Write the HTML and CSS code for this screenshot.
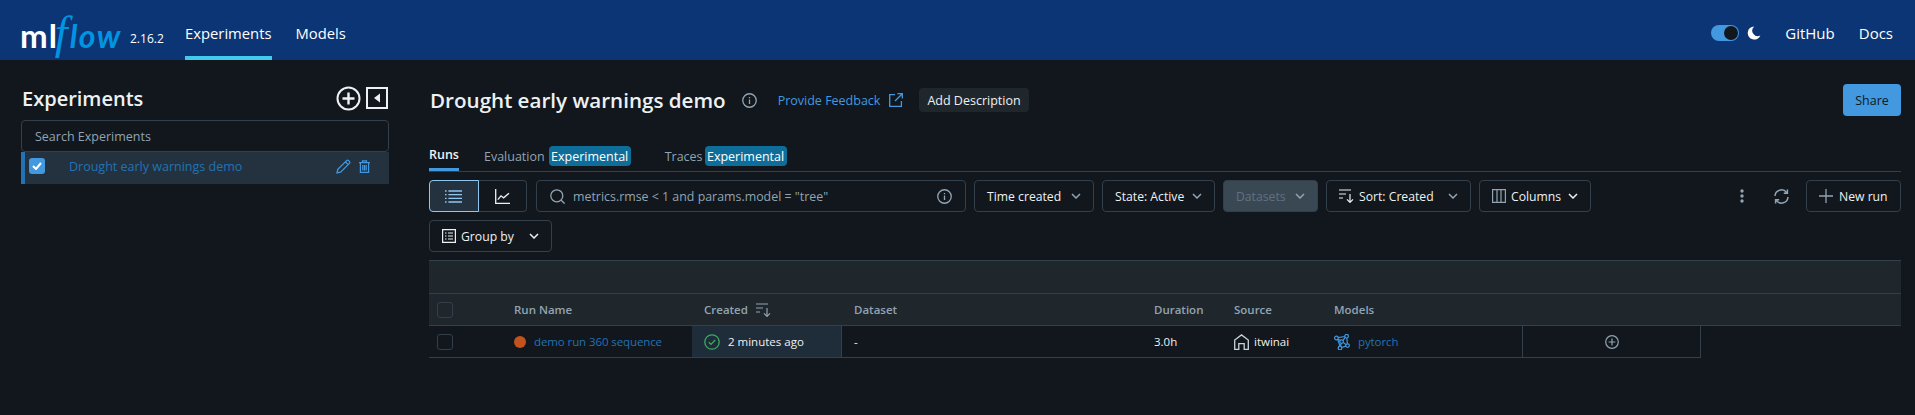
FILE: index.html
```html
<!DOCTYPE html>
<html>

<head>
  <meta charset="UTF-8">
  <title>MLflow Experiments</title>
  <link rel="stylesheet" href="styles.css">
</head>

<body>
  <header class="topbar">
    <div class="logo"><span class="logo-ml">ml</span><span class="logo-f">f</span><span class="logo-low">low</span></div>
    <span class="version">2.16.2</span>
    <nav class="topnav">
      <a class="topnav-item active">Experiments</a>
      <a class="topnav-item">Models</a>
    </nav>
    <div class="topbar-right">
      <span class="switch"><span class="switch-knob"></span></span>
      <svg class="moon" width="14" height="14" viewBox="0 0 14 14"><path d="M7.2 0.4A6.6 6.6 0 1 0 13.4 9.6 5.6 5.6 0 0 1 7.2 0.4Z" fill="#fff"/></svg>
      <a class="topbar-link">GitHub</a>
      <a class="topbar-link">Docs</a>
    </div>
  </header>

  <div class="page">
    <aside class="sidebar">
      <div class="sidebar-head">
        <h2>Experiments</h2>
        <svg class="add-exp" width="25" height="25" viewBox="0 0 25 25" fill="none" stroke="#eef1f3" stroke-width="2"><circle cx="12.5" cy="12.5" r="11"/><path d="M12.5 6.5v12M6.5 12.5h12" stroke-width="2.4"/></svg>
        <svg class="collapse" width="22" height="22" viewBox="0 0 22 22"><rect x="1" y="1" width="20" height="20" fill="none" stroke="#eef1f3" stroke-width="2"/><path d="M14 6.5v9L8 11Z" fill="#eef1f3"/></svg>
      </div>
      <div class="exp-search">Search Experiments</div>
      <div class="exp-row">
        <span class="exp-check"><svg width="10" height="8" viewBox="0 0 10 8" fill="none" stroke="#fff" stroke-width="2"><path d="M1 4l3 3 5-6"/></svg></span>
        <span class="exp-name">Drought early warnings demo</span>
        <svg class="exp-edit" width="15" height="15" viewBox="0 0 15 15" fill="none" stroke="#4299e0" stroke-width="1.3"><path d="M1 14l.8-3.6L10.6 1.6a1.4 1.4 0 0 1 2 0l.8.8a1.4 1.4 0 0 1 0 2L4.6 13.2Z M9.4 2.8l2.8 2.8"/></svg>
        <svg class="exp-trash" width="11" height="13" viewBox="0 0 11 13" fill="none" stroke="#4299e0" stroke-width="1.2"><path d="M0 2.6h11M3.5 2.4V.8h4v1.6M1.4 2.8v9.6h8.2V2.8M3.8 5v5.4M5.5 5v5.4M7.2 5v5.4"/></svg>
      </div>
    </aside>

    <main class="content">
      <div class="title-row">
        <h1>Drought early warnings demo</h1>
        <svg class="info-icon title-info" width="15" height="15" viewBox="0 0 16 16" fill="none" stroke="currentColor" stroke-width="1.4"><circle cx="8" cy="8" r="7.2"/><path d="M8 7v4.6M8 4.2v1.4"/></svg>
        <a class="feedback">Provide Feedback</a>
        <svg class="feedback-icon" width="14" height="14" viewBox="0 0 14 14" fill="none" stroke="#4299e0" stroke-width="1.3"><path d="M6 1.6H.7v11.7h11.7V8M8.4.7h4.9v4.9M13.3.7L6 8"/></svg>
        <button class="add-desc">Add Description</button>
        <button class="share">Share</button>
      </div>

      <div class="tabs">
        <span class="tab tab-runs">Runs</span>
        <span class="tab tab-eval">Evaluation</span>
        <span class="badge">Experimental</span>
        <span class="tab tab-traces">Traces</span>
        <span class="badge">Experimental</span>
      </div>

      <div class="toolbar">
        <div class="segmented">
          <span class="seg seg-on">
            <svg width="17" height="13" viewBox="0 0 17 13" fill="none" stroke="#8fc6f0" stroke-width="1.3"><path d="M0 1h1.6M3.4 1H17M0 4.7h1.6M3.4 4.7H17M0 8.4h1.6M3.4 8.4H17M0 12h1.6M3.4 12H17"/></svg>
          </span>
          <span class="seg">
            <svg width="15" height="15" viewBox="0 0 15 15" fill="none" stroke="#eef1f3" stroke-width="1.3"><path d="M.7 0v14.3H15M2.8 10.6l3.2-3.8 2.6 2 5.4-4.6"/></svg>
          </span>
        </div>
        <div class="search">
          <svg width="15" height="15" viewBox="0 0 15 15" fill="none" stroke="#92a4b3" stroke-width="1.3"><circle cx="6.8" cy="6.8" r="6"/><path d="M11.2 11.2L14.6 14.6"/></svg>
          <span class="search-text">metrics.rmse &lt; 1 and params.model = "tree"</span>
          <svg class="info-icon" width="15" height="15" viewBox="0 0 16 16" fill="none" stroke="currentColor" stroke-width="1.4"><circle cx="8" cy="8" r="7.2"/><path d="M8 7v4.6M8 4.2v1.4"/></svg>
        </div>
        <button class="btn w-time">Time created<svg class="chev" width="10" height="6" viewBox="0 0 10 6"><path d="M1 1l4 4 4-4"/></svg></button>
        <button class="btn w-state">State: Active<svg class="chev" width="10" height="6" viewBox="0 0 10 6"><path d="M1 1l4 4 4-4"/></svg></button>
        <button class="btn btn-off w-data">Datasets<svg class="chev" width="10" height="6" viewBox="0 0 10 6"><path d="M1 1l4 4 4-4"/></svg></button>
        <button class="btn w-sort">
          <svg class="sort-icon" width="15" height="14" viewBox="0 0 15 14" fill="none" stroke="#eef1f3" stroke-width="1.2"><path d="M0 1h12M0 5h7M0 9h4M11 5v8.2M8 10.4l3 3 3-3"/></svg>
          <span class="btn-label">Sort: Created</span><svg class="chev" width="10" height="6" viewBox="0 0 10 6"><path d="M1 1l4 4 4-4"/></svg>
        </button>
        <button class="btn w-cols">
          <svg class="cols-icon" width="14" height="14" viewBox="0 0 14 14" fill="none" stroke="#92a4b3" stroke-width="1.2"><path d="M.6.6h12.8v12.8H.6ZM5 .6v12.8M9 .6v12.8"/></svg>
          <span class="btn-label">Columns</span><svg class="chev chev-white" width="10" height="6" viewBox="0 0 10 6"><path d="M1 1l4 4 4-4"/></svg>
        </button>
        <div class="toolbar-right">
          <svg class="kebab" width="4" height="14" viewBox="0 0 4 14" fill="#92a4b3"><circle cx="2" cy="2" r="1.7"/><circle cx="2" cy="7" r="1.7"/><circle cx="2" cy="12" r="1.7"/></svg>
          <svg class="refresh" width="15" height="15" viewBox="0 0 15 15" fill="none" stroke="#92a4b3" stroke-width="1.5"><path d="M1 7A6.4 6.4 0 0 1 12.6 3.6M14 8A6.4 6.4 0 0 1 2.4 11.4M13.4.6v3.6H9.8M1.6 14.4v-3.6h3.6"/></svg>
          <button class="btn new-run">
            <svg width="14" height="14" viewBox="0 0 14 14" stroke="#92a4b3" stroke-width="1.3"><path d="M7 0v14M0 7h14"/></svg>
            <span>New run</span>
          </button>
        </div>
      </div>
      <div class="toolbar">
        <button class="btn w-group">
          <svg class="group-icon" width="14" height="14" viewBox="0 0 14 14" fill="none" stroke="#eef1f3" stroke-width="1.2"><path d="M.6.6h12.8v12.8H.6ZM3 4h1.5M6 4h5M3 7h1.5M6 7h5M3 10h1.5M6 10h5"/></svg>
          <span class="btn-label">Group by</span><svg class="chev chev-white" width="10" height="6" viewBox="0 0 10 6"><path d="M1 1l4 4 4-4"/></svg>
        </button>
      </div>

      <div class="runs-table">
        <div class="group-band"></div>
        <div class="table-row table-head">
          <div class="cell c-check"><span class="checkbox"></span></div>
          <div class="cell c-name">Run Name</div>
          <div class="cell c-created">Created
            <svg class="head-sort" width="15" height="14" viewBox="0 0 15 14" fill="none" stroke="#92a4b3" stroke-width="1.2"><path d="M0 1h12M0 5h7M0 9h4M11 5v8.2M8 10.4l3 3 3-3"/></svg>
          </div>
          <div class="cell c-dataset">Dataset</div>
          <div class="cell c-duration">Duration</div>
          <div class="cell c-source">Source</div>
          <div class="cell c-models">Models</div>
        </div>
        <div class="table-row table-body">
          <div class="cell c-check"><span class="checkbox"></span></div>
          <div class="cell c-name"><span class="run-dot"></span><a class="link">demo run 360 sequence</a></div>
          <div class="cell c-created created-on">
            <svg class="status-ok" width="16" height="16" viewBox="0 0 16 16" fill="none" stroke="#3caa60" stroke-width="1.3"><circle cx="8" cy="8" r="7.2"/><path d="M4.8 8.2l2.2 2.2 4.2-4.4"/></svg>
            2 minutes ago
          </div>
          <div class="cell c-dataset">-</div>
          <div class="cell c-duration">3.0h</div>
          <div class="cell c-source">
            <svg class="source-icon" width="15" height="16" viewBox="0 0 15 16" fill="none" stroke="#c8d2da" stroke-width="1.3"><path d="M.7 15.3V6L7.5.9 14.3 6v9.3H10.2V9.6H4.8v5.7Z"/></svg>
            itwinai
          </div>
          <div class="cell c-models">
            <svg class="model-icon" width="16" height="16" viewBox="0 0 16 16" fill="none" stroke="#4299e0" stroke-width="1.2"><circle cx="2.4" cy="4" r="1.8"/><circle cx="12.6" cy="2.2" r="1.8"/><circle cx="13.6" cy="11.6" r="1.8"/><circle cx="6" cy="14" r="1.8"/><circle cx="7.6" cy="7.6" r="1.8"/><path d="M4.2 3.7l6.6-1.2M3.6 5.4l2.6 6.9M12.8 4l.6 5.8M11.9 12.1l-4.2 1.4M3.9 5.1l2.4 1.4M9.2 8.4l2.9 2.3M7.3 9.4l-.9 2.8M11.2 3.3L9 6.4"/></svg>
            <a class="link">pytorch</a>
          </div>
          <div class="cell c-add">
            <svg width="14" height="14" viewBox="0 0 14 14" fill="none" stroke="#92a4b3" stroke-width="1.2"><circle cx="7" cy="7" r="6.3"/><path d="M7 3.6v6.8M3.6 7h6.8"/></svg>
          </div>
        </div>
      </div>
    </main>
  </div>
</body>

</html>
```

FILE: styles.css
```css
* {
  box-sizing: border-box;
}

html,
body {
  margin: 0;
  padding: 0;
  height: 100%;
  overflow: hidden;
}

body {
  background-color: #11171c;
  color: #eef1f3;
  font-family: "Open Sans", "Noto Sans", sans-serif;
  font-size: 12.5px;
}

/* top bar */
.topbar {
  display: flex;
  align-items: center;
  height: 60px;
  padding: 0 22px 0 20px;
  background-color: #0b3574;
}

.logo {
  display: flex;
  align-items: baseline;
  width: 105px;
  height: 40px;
  line-height: 46px;
  font-family: "Lato", sans-serif;
  white-space: nowrap;
}

.logo-ml {
  color: #fff;
  font-size: 33px;
  font-weight: 700;
  letter-spacing: 1px;
}

.logo-f {
  margin-left: -3px;
  color: #0194e2;
  font-family: "Liberation Serif", serif;
  font-size: 46px;
  font-style: italic;
}

.logo-low {
  margin-left: 2px;
  color: #0194e2;
  font-size: 32px;
  font-style: italic;
  font-weight: 700;
  letter-spacing: 1.5px;
}

.version {
  width: 55px;
  margin: 16px 0 0 5px;
  color: #fff;
  font-size: 12px;
}

.topnav {
  display: flex;
  gap: 24px;
  height: 100%;
}

.topnav-item {
  display: flex;
  align-items: center;
  padding-top: 10px;
  color: #fff;
  font-size: 14.8px;
  border-bottom: 4px solid transparent;
}

.topnav-item.active {
  border-bottom-color: #43c9ed;
}

.topbar-right {
  display: flex;
  align-items: center;
  margin-left: auto;
  padding-top: 6px;
}

.switch {
  display: flex;
  justify-content: flex-end;
  width: 28px;
  height: 16px;
  padding: 1px;
  border-radius: 8px;
  background-color: #4299e0;
}

.switch-knob {
  width: 14px;
  height: 14px;
  border-radius: 50%;
  background-color: #11171c;
}

.moon {
  margin: 0 24px 0 8px;
}

.topbar-link {
  margin-left: 24px;
  color: #fff;
  font-size: 15px;
}

.moon + .topbar-link {
  margin-left: 0;
}

/* page */
.page {
  display: flex;
  padding-right: 14px;
}

.sidebar {
  flex: none;
  width: 368px;
  margin-left: 21px;
  padding-top: 26px;
}

.sidebar-head {
  display: flex;
  align-items: center;
  height: 24px;
  margin-bottom: 10px;
}

.sidebar-head h2 {
  flex: 1;
  margin: 0;
  padding-left: 1px;
  font-size: 20px;
  font-weight: 600;
}

.add-exp {
  margin-right: 5px;
}

.collapse {
  margin-right: 1px;
}

.exp-search {
  display: flex;
  align-items: center;
  height: 32px;
  padding-left: 13px;
  border: 1px solid #333f4a;
  border-radius: 4px;
  color: #92a4b3;
}

.exp-row {
  display: flex;
  align-items: center;
  height: 32px;
  padding: 0 0 4px 4px;
  border-left: 4px solid #2272b4;
  background-color: #23323e;
}

.exp-check {
  display: flex;
  align-items: center;
  justify-content: center;
  flex: none;
  width: 16px;
  height: 16px;
  border-radius: 3px;
  background-color: #4299e0;
}

.exp-name {
  flex: 1;
  margin-left: 24px;
  color: #2272b4;
}

.exp-edit {
  margin-right: 8px;
}

.exp-trash {
  margin-right: 19px;
}

.content {
  flex: 1;
  min-width: 0;
  margin-left: 40px;
  padding-top: 24px;
}

.title-row {
  display: flex;
  align-items: center;
  height: 32px;
}

.title-row h1 {
  margin: 0 0 0 1px;
  font-size: 20.6px;
  font-weight: 600;
}

.info-icon {
  flex: none;
  color: #92a4b3;
}

.title-info {
  margin-left: 16px;
}

.feedback {
  margin-left: 21px;
  color: #4299e0;
}

.feedback-icon {
  margin-left: 9px;
}

button {
  font: inherit;
  color: inherit;
  white-space: nowrap;
}

.add-desc {
  height: 24px;
  margin-left: 16px;
  padding: 0 8px;
  border: 0;
  border-radius: 4px;
  background-color: #1f272d;
}

.share {
  width: 58px;
  height: 32px;
  margin-left: auto;
  border: 0;
  border-radius: 4px;
  background-color: #4299e0;
  color: #11171c;
}

/* tabs */
.tabs {
  display: flex;
  align-items: center;
  height: 26px;
  margin-top: 30px;
  padding-bottom: 5px;
  border-bottom: 1px solid #333f4a;
}

.tab {
  color: #92a4b3;
}

.tab-runs {
  display: flex;
  align-items: center;
  height: 25px;
  margin-bottom: -5px;
  padding-bottom: 5px;
  border-bottom: 3px solid #4299e0;
  color: #eef1f3;
  font-weight: 600;
}

.tab-eval {
  margin-left: 25px;
}

.tab-traces {
  margin-left: 34px;
}

.badge {
  display: flex;
  align-items: center;
  justify-content: center;
  width: 82px;
  height: 20px;
  margin-left: 4px;
  border-radius: 4px;
  background-color: #0e6e99;
  color: #fff;
}

.tab-traces + .badge {
  margin-left: 2px;
}

/* toolbar */
.toolbar {
  display: flex;
  gap: 8px;
  margin-top: 8px;
  font-size: 12.2px;
}

.segmented {
  display: flex;
  width: 98px;
  height: 32px;
  margin-right: 1px;
}

.seg {
  display: flex;
  align-items: center;
  justify-content: center;
  flex: 1;
  border: 1px solid #333f4a;
  border-left: 0;
  border-radius: 0 4px 4px 0;
}

.seg-on {
  border: 1px solid #8fc6f0;
  border-radius: 4px 0 0 4px;
  background-color: #23323e;
}

.search {
  display: flex;
  align-items: center;
  width: 430px;
  height: 32px;
  padding: 0 13px;
  border: 1px solid #333f4a;
  border-radius: 4px;
}

.search-text {
  flex: 1;
  margin-left: 8px;
  color: #92a4b3;
  font-size: 12.4px;
}

.btn {
  display: flex;
  align-items: center;
  justify-content: space-between;
  height: 32px;
  padding: 0 12px;
  border: 1px solid #333f4a;
  border-radius: 4px;
  background: none;
  color: #eef1f3;
}

.chev {
  flex: none;
  fill: none;
  stroke: #92a4b3;
  stroke-width: 1.5;
}

.chev-white {
  stroke: #eef1f3;
}

.btn-off {
  background-color: #3a4853;
  color: #5f7281;
}

.w-time {
  width: 120px;
}

.w-state {
  width: 113px;
}

.w-data {
  width: 95px;
}

.w-sort {
  width: 145px;
}

.w-cols {
  width: 112px;
}

.w-group {
  width: 123px;
  flex: none;
}

.btn-label {
  flex: 1;
  margin-left: 5px;
  text-align: left;
}

.toolbar-right {
  display: flex;
  align-items: center;
  flex: 1;
  justify-content: flex-end;
}

.kebab {
  margin-right: 30px;
}

.refresh {
  margin-right: 17px;
}

.new-run {
  width: 95px;
  justify-content: flex-start;
  gap: 6px;
}

/* table */
.runs-table {
  margin-top: 8px;
  font-size: 11.5px;
}

.group-band {
  height: 34px;
  border-top: 1px solid #333f4a;
  border-bottom: 1px solid #333f4a;
  background-color: #1f272d;
}

.table-row {
  display: flex;
  height: 32px;
  border-bottom: 1px solid #333f4a;
}

.table-head {
  background-color: #1f272d;
  color: #92a4b3;
  font-weight: 600;
}

.table-body {
  width: 1272px;
}

.cell {
  display: flex;
  align-items: center;
  flex: none;
}

.checkbox {
  width: 16px;
  height: 16px;
  border: 1px solid #333f4a;
  border-radius: 3px;
}

.c-check {
  width: 85px;
  padding-left: 8px;
}

.c-name {
  width: 178px;
}

.c-created {
  width: 150px;
  padding-left: 12px;
}

.c-dataset {
  width: 312px;
  padding-left: 12px;
}

.c-duration {
  width: 80px;
}

.c-source {
  width: 100px;
}

.c-models {
  width: 188px;
}

.c-add {
  flex: 1;
  justify-content: center;
  border-left: 1px solid #333f4a;
  border-right: 1px solid #333f4a;
}

.head-sort {
  margin-left: 8px;
}

.created-on {
  background-color: #1f2d3a;
  border-right: 1px solid #333f4a;
}

.status-ok {
  margin-right: 8px;
}

.run-dot {
  width: 12px;
  height: 12px;
  margin-right: 8px;
  border-radius: 50%;
  background-color: #c2531d;
}

.link {
  color: #2272b4;
  letter-spacing: -0.1px;
}

.source-icon {
  margin-right: 5px;
}

.model-icon {
  margin-right: 8px;
}
```
